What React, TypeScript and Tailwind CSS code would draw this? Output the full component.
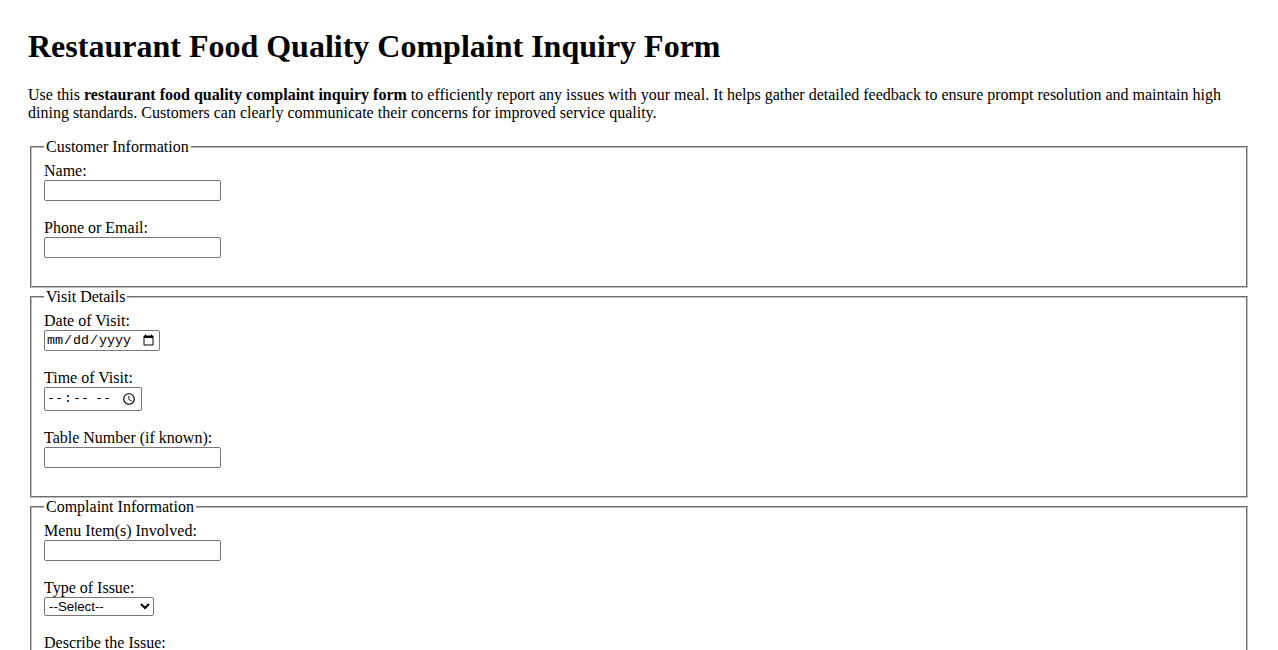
import { ReactNode } from 'react';

function Field({ label, children }: { label: string; children: ReactNode }) {
  return (
    <div className="mb-[18px]">
      <label className="block leading-[18px]">{label}</label>
      {children}
    </div>
  );
}

const textInput =
  "block h-[21px] w-[177px] rounded-[2px] border border-[#767676] bg-white px-[2px] font-['Liberation_Sans',Arial,sans-serif] text-[13.33px]";

function Section({ title, children }: { title: string; children: ReactNode }) {
  return (
    <fieldset className="mx-[2px] min-w-0 border-2 border-[#c0c0c0] [border-style:groove] px-3 pt-[5.6px] pb-[10px]">
      <legend className="px-[2px] leading-[18.4px]">{title}</legend>
      {children}
    </fieldset>
  );
}

export default function App() {
  return (
    <div className="min-h-screen bg-white px-[28px] pt-[28px] pb-[28px] font-['Liberation_Serif','Times_New_Roman',serif] text-[16px] leading-[18.4px] text-black">
      <h1 className="mb-[21.44px] text-[32px] font-bold leading-[36.8px]">
        Restaurant Food Quality Complaint Inquiry Form
      </h1>
      <p className="mb-4 leading-[18px]">
        Use this <strong className="font-bold">restaurant food quality complaint inquiry form</strong> to efficiently
        report any issues with your meal. It helps gather detailed feedback to ensure prompt resolution and maintain
        high dining standards. Customers can clearly communicate their concerns for improved service quality.
      </p>

      <form>
        <Section title="Customer Information">
          <Field label="Name:">
            <input type="text" className={textInput} />
          </Field>
          <Field label="Phone or Email:">
            <input type="text" className={textInput} />
          </Field>
        </Section>

        <Section title="Visit Details">
          <Field label="Date of Visit:">
            <input
              type="date"
              className="block h-[21px] w-[116px] rounded-[2px] border border-[#767676] bg-white pl-[1px] pr-[2px] font-['Liberation_Mono',monospace] text-[13.33px]"
            />
          </Field>
          <Field label="Time of Visit:">
            <input
              type="time"
              className="block h-[24px] w-[98px] rounded-[2px] border border-[#767676] bg-white pl-[1px] pr-[2px] font-['Liberation_Mono',monospace] text-[13.33px]"
            />
          </Field>
          <Field label="Table Number (if known):">
            <input type="text" className={textInput} />
          </Field>
        </Section>

        <Section title="Complaint Information">
          <Field label="Menu Item(s) Involved:">
            <input type="text" className={textInput} />
          </Field>
          <Field label="Type of Issue:">
            <select className="block h-[19px] w-[110px] rounded-[2px] border border-[#767676] bg-white font-['Liberation_Sans',Arial,sans-serif] text-[13.33px]">
              <option>--Select--</option>
              <option>Cold food</option>
              <option>Undercooked</option>
              <option>Overcooked</option>
              <option>Wrong order</option>
              <option>Foreign object</option>
              <option>Other</option>
            </select>
          </Field>
          <Field label="Describe the Issue:">
            <textarea
              rows={4}
              cols={40}
              className="block rounded-[2px] border border-[#767676] bg-white p-[2px] font-['Liberation_Mono',monospace] text-[13.33px]"
            />
          </Field>
        </Section>
      </form>
    </div>
  );
}
